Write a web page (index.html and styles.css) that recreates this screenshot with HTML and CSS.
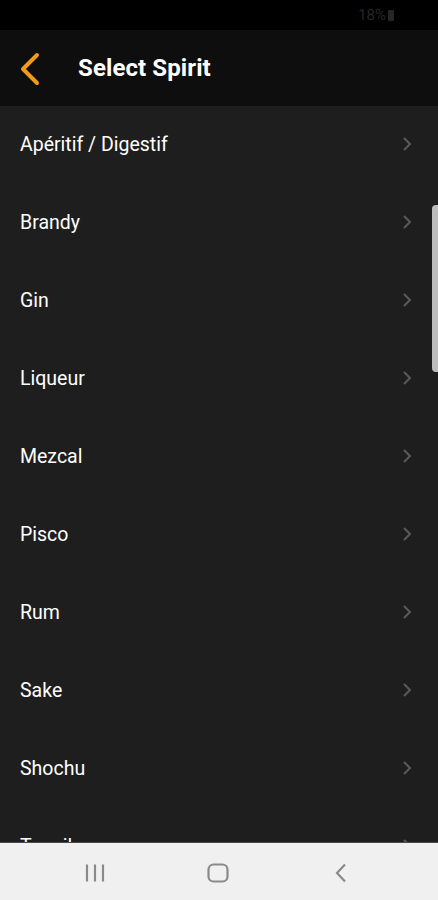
FILE: index.html
```html
<!DOCTYPE html>
<html>
<head>
<meta charset="utf-8">
<link rel="stylesheet" href="styles.css">
</head>
<body>
<div class="screen">
  <div class="status"><span class="battery">18%</span><span class="batt-icon"></span></div>
  <header class="appbar">
    <svg class="back" width="24" height="34" viewBox="0 0 24 34"><path d="M19 3 L5 17 L19 31" fill="none" stroke="#f29b16" stroke-width="4" stroke-linecap="round" stroke-linejoin="round"/></svg>
    <h1 class="title">Select Spirit</h1>
  </header>
  <div class="list-wrap">
    <ul class="list">
      <li class="row"><span>Apéritif / Digestif</span><svg class="chev" width="10" height="16" viewBox="0 0 10 16"><path d="M2 2 L8 8 L2 14" fill="none" stroke="#5a5a5a" stroke-width="2"/></svg></li>
      <li class="row"><span>Brandy</span><svg class="chev" width="10" height="16" viewBox="0 0 10 16"><path d="M2 2 L8 8 L2 14" fill="none" stroke="#5a5a5a" stroke-width="2"/></svg></li>
      <li class="row"><span>Gin</span><svg class="chev" width="10" height="16" viewBox="0 0 10 16"><path d="M2 2 L8 8 L2 14" fill="none" stroke="#5a5a5a" stroke-width="2"/></svg></li>
      <li class="row"><span>Liqueur</span><svg class="chev" width="10" height="16" viewBox="0 0 10 16"><path d="M2 2 L8 8 L2 14" fill="none" stroke="#5a5a5a" stroke-width="2"/></svg></li>
      <li class="row"><span>Mezcal</span><svg class="chev" width="10" height="16" viewBox="0 0 10 16"><path d="M2 2 L8 8 L2 14" fill="none" stroke="#5a5a5a" stroke-width="2"/></svg></li>
      <li class="row"><span>Pisco</span><svg class="chev" width="10" height="16" viewBox="0 0 10 16"><path d="M2 2 L8 8 L2 14" fill="none" stroke="#5a5a5a" stroke-width="2"/></svg></li>
      <li class="row"><span>Rum</span><svg class="chev" width="10" height="16" viewBox="0 0 10 16"><path d="M2 2 L8 8 L2 14" fill="none" stroke="#5a5a5a" stroke-width="2"/></svg></li>
      <li class="row"><span>Sake</span><svg class="chev" width="10" height="16" viewBox="0 0 10 16"><path d="M2 2 L8 8 L2 14" fill="none" stroke="#5a5a5a" stroke-width="2"/></svg></li>
      <li class="row"><span>Shochu</span><svg class="chev" width="10" height="16" viewBox="0 0 10 16"><path d="M2 2 L8 8 L2 14" fill="none" stroke="#5a5a5a" stroke-width="2"/></svg></li>
      <li class="row"><span>Tequila</span><svg class="chev" width="10" height="16" viewBox="0 0 10 16"><path d="M2 2 L8 8 L2 14" fill="none" stroke="#5a5a5a" stroke-width="2"/></svg></li>
    </ul>
    <div class="scrollbar"></div>
  </div>
  <nav class="navbar">
    <svg width="22" height="20" viewBox="0 0 22 20"><path d="M3 1.5 V18.5 M11 1.5 V18.5 M19 1.5 V18.5" stroke="#8a8a8a" stroke-width="2.2"/></svg>
    <svg width="22" height="20" viewBox="0 0 22 20"><rect x="1.5" y="1.5" width="19" height="17" rx="5" fill="none" stroke="#8a8a8a" stroke-width="2.2"/></svg>
    <svg width="22" height="20" viewBox="0 0 22 20"><path d="M15 1.5 L7 10 L15 18.5" fill="none" stroke="#8a8a8a" stroke-width="2.2"/></svg>
  </nav>
</div>
</body>
</html>
```
FILE: styles.css
```css
* { box-sizing: border-box; }
html, body { margin: 0; padding: 0; background: #1e1e1e; }
body { font-family: Roboto, "Liberation Sans", sans-serif; }
.screen { width: 438px; height: 900px; display: flex; flex-direction: column; overflow: hidden; background: #1e1e1e; }
.status { height: 30px; background: #000; display: flex; justify-content: flex-end; align-items: center; padding-right: 44px; gap: 2px; }
.battery { color: #262626; font-size: 15px; }
.batt-icon { width: 6px; height: 11px; background: #262626; border-radius: 1px; }
.appbar { height: 76px; background: #0e0e0e; display: flex; align-items: center; padding-left: 18px; }
.back { display: block; margin-top: 1px; }
.title { margin: 0 0 0 36px; color: #fff; font-size: 24px; font-weight: 700; letter-spacing: 0.1px; }
.list-wrap { position: relative; flex: 1; overflow: hidden; }
.list { list-style: none; margin: -1px 0 0; padding: 0; }
.row { height: 78px; display: flex; align-items: center; justify-content: space-between; padding: 0 26px 0 20px; color: #fff; font-size: 19.5px; }
.chev { display: block; }
.scrollbar { position: absolute; right: 0; top: 99px; width: 6px; height: 167px; background: #bdbdbd; border-radius: 4px 0 0 4px; }
.navbar { height: 58px; flex: none; background: #f0f0f0; border-top: 1px solid #4a4a4a; display: flex; justify-content: space-between; align-items: center; padding: 2px 86px 0 84px; }
```
